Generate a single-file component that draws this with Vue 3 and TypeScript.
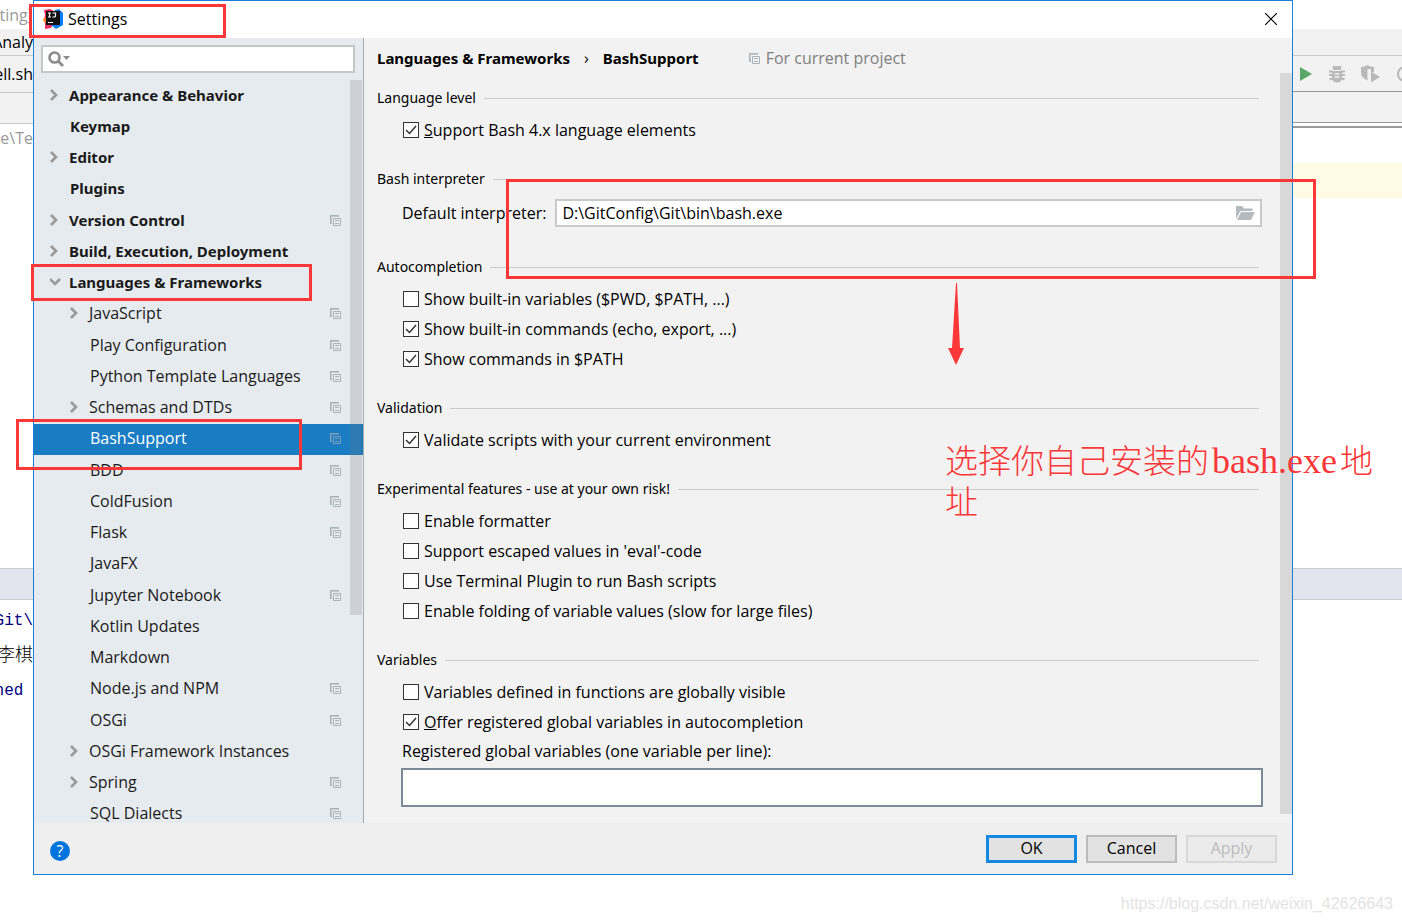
<script setup lang="ts">
import { ref } from 'vue'

interface TreeItem {
  label: string
  level: 0 | 1
  arrow?: 'right' | 'down'
  project?: boolean
}

interface Option {
  id: string
  label: string
  mnemonic?: string
  checked: boolean
}

const tree: TreeItem[] = [
  { label: 'Appearance & Behavior', level: 0, arrow: 'right' },
  { label: 'Keymap', level: 0 },
  { label: 'Editor', level: 0, arrow: 'right' },
  { label: 'Plugins', level: 0 },
  { label: 'Version Control', level: 0, arrow: 'right', project: true },
  { label: 'Build, Execution, Deployment', level: 0, arrow: 'right' },
  { label: 'Languages & Frameworks', level: 0, arrow: 'down' },
  { label: 'JavaScript', level: 1, arrow: 'right', project: true },
  { label: 'Play Configuration', level: 1, project: true },
  { label: 'Python Template Languages', level: 1, project: true },
  { label: 'Schemas and DTDs', level: 1, arrow: 'right', project: true },
  { label: 'BashSupport', level: 1, project: true },
  { label: 'BDD', level: 1, project: true },
  { label: 'ColdFusion', level: 1, project: true },
  { label: 'Flask', level: 1, project: true },
  { label: 'JavaFX', level: 1 },
  { label: 'Jupyter Notebook', level: 1, project: true },
  { label: 'Kotlin Updates', level: 1 },
  { label: 'Markdown', level: 1 },
  { label: 'Node.js and NPM', level: 1, project: true },
  { label: 'OSGi', level: 1, project: true },
  { label: 'OSGi Framework Instances', level: 1, arrow: 'right' },
  { label: 'Spring', level: 1, arrow: 'right', project: true },
  { label: 'SQL Dialects', level: 1, project: true },
]

const selected = ref('BashSupport')
const query = ref('')
const interpreter = ref('D:\\GitConfig\\Git\\bin\\bash.exe')
const globals = ref('')

const language = ref<Option[]>([
  { id: 'bash4', mnemonic: 'S', label: 'upport Bash 4.x language elements', checked: true },
])
const completion = ref<Option[]>([
  { id: 'vars', label: 'Show built-in variables ($PWD, $PATH, ...)', checked: false },
  { id: 'cmds', label: 'Show built-in commands (echo, export, ...)', checked: true },
  { id: 'path', label: 'Show commands in $PATH', checked: true },
])
const validation = ref<Option[]>([
  { id: 'validate', label: 'Validate scripts with your current environment', checked: true },
])
const experimental = ref<Option[]>([
  { id: 'formatter', label: 'Enable formatter', checked: false },
  { id: 'eval', label: "Support escaped values in 'eval'-code", checked: false },
  { id: 'terminal', label: 'Use Terminal Plugin to run Bash scripts', checked: false },
  { id: 'folding', label: 'Enable folding of variable values (slow for large files)', checked: false },
])
const variables = ref<Option[]>([
  { id: 'global', label: 'Variables defined in functions are globally visible', checked: false },
  { id: 'offer', mnemonic: 'O', label: 'ffer registered global variables in autocompletion', checked: true },
])

const sections = [
  { title: 'Language level', options: language },
  { title: 'Bash interpreter', options: null },
  { title: 'Autocompletion', options: completion },
  { title: 'Validation', options: validation },
  { title: 'Experimental features - use at your own risk!', options: experimental },
  { title: 'Variables', options: variables },
]
</script>

<template>
  <div class="desktop">
    <svg class="defs" aria-hidden="true">
      <symbol id="copy" viewBox="0 0 11 11">
        <path d="M0 0h9v2H2v7H0z" fill="currentColor" opacity=".6" />
        <path d="M.5 8.500v-8h8v1M.5 8.500h1.500" fill="none" stroke="currentColor" />
        <path d="M3.500 3.500h7v7h-7zM5 5.500h4M5 8.500h4" fill="none" stroke="currentColor" />
      </symbol>
    </svg>

    <div class="ide ide-left">
      <div class="bar caption">ting]</div>
      <div class="bar menu">Analy</div>
      <div class="bar tools">ell.sh</div>
      <div class="bar tabs"></div>
      <div class="editor path">ce\Te</div>
      <div class="bar split"></div>
      <div class="console">
        <span>Git\</span>
        <span class="cn">李棋</span>
        <span>ned&nbsp;</span>
      </div>
    </div>

    <main class="dialog">
      <header class="titlebar">
        <svg class="logo" width="20" height="20" viewBox="0 0 20 20">
          <path d="M1 1l6-1 6 3-4 8-8-1 1-4z" fill="#fe2857" />
          <path d="M0 10l5-3 3 10-7-4z" fill="#fc801d" />
          <path d="M2 13l8 3-2 3-6 1z" fill="#e8315f" />
          <path d="M12 1l4-1 4 4v12l-7 4-5-4z" fill="#087cfa" />
          <rect x="3" y="2" width="14" height="14" fill="#111" />
          <path d="M5 4h3M6.500 4v4M5 8h3M9.500 4h3v3q0 1-1.500 1H9.500M5 13.500h5" fill="none" stroke="#fff" stroke-width="1.200" />
        </svg>
        <h1>Settings</h1>
        <button class="close" type="button" aria-label="Close">
          <svg width="12" height="12" viewBox="0 0 12 12">
            <path d="M0 0l12 12M12 0L0 12" stroke="#000" stroke-width="1.200" />
          </svg>
        </button>
      </header>

      <div class="body">
        <nav class="side">
          <div class="search">
            <svg width="24" height="16" viewBox="0 0 24 16">
              <circle cx="6.500" cy="6.500" r="5" fill="none" stroke="#8c8c8c" stroke-width="2.600" />
              <path d="M10 10l5 5" stroke="#8c8c8c" stroke-width="2.800" />
              <path d="M15 5h7l-3.500 4z" fill="#8c8c8c" />
            </svg>
            <input v-model="query" type="text" aria-label="Search settings" />
          </div>
          <div class="tree-wrap">
            <ul class="tree">
              <li v-for="item in tree" :key="item.label">
                <button
                  type="button"
                  class="node"
                  :class="['level-' + item.level, { leaf: !item.arrow, active: item.label === selected }]"
                  @click="selected = item.label"
                >
                  <span class="twisty">
                    <svg v-if="item.arrow === 'right'" width="8" height="12" viewBox="0 0 8 12">
                      <path d="M1 1l5 5-5 5" fill="none" stroke="#999" stroke-width="2.600" />
                    </svg>
                    <svg v-else-if="item.arrow === 'down'" class="down" width="12" height="8" viewBox="0 0 12 8">
                      <path d="M0 1l5 5 5-5" fill="none" stroke="#999" stroke-width="2.600" />
                    </svg>
                  </span>
                  <span class="name">{{ item.label }}</span>
                  <svg v-if="item.project" class="copy" width="11" height="11"><use href="#copy" /></svg>
                </button>
              </li>
            </ul>
            <div class="thumb"></div>
          </div>
        </nav>

        <section class="content">
          <div class="crumbs">
            <h2>Languages &amp; Frameworks</h2>
            <span class="sep">›</span>
            <h2>BashSupport</h2>
            <span class="scope">
              <svg class="copy" width="11" height="11"><use href="#copy" /></svg>
              For current project
            </span>
          </div>

          <div class="form">
            <section v-for="s in sections" :key="s.title" class="group">
              <h3>{{ s.title }}</h3>
              <template v-if="s.options">
                <label v-for="o in s.options.value" :key="o.id" class="check">
                  <input v-model="o.checked" type="checkbox" />
                  <span><u v-if="o.mnemonic">{{ o.mnemonic }}</u>{{ o.label }}</span>
                </label>
              </template>
              <div v-else class="field">
                <label for="interpreter">Default interpreter:</label>
                <div class="path-box">
                  <input id="interpreter" v-model="interpreter" type="text" />
                  <button type="button" aria-label="Browse">
                    <svg width="19" height="14" viewBox="0 0 19 14">
                      <path d="M0 13V0h6l2 2.500h8.500V5H4.500z" fill="#b4bcc2" />
                      <path d="M5 6h14l-4 8H1z" fill="#b4bcc2" />
                    </svg>
                  </button>
                </div>
              </div>
            </section>
            <div class="globals">
              <label for="globals">Registered global variables (one variable per line):</label>
              <textarea id="globals" v-model="globals" rows="1"></textarea>
            </div>
          </div>
          <div class="thumb"></div>
        </section>
      </div>

      <footer class="footer">
        <button class="help" type="button" aria-label="Help">?</button>
        <button class="btn primary" type="button">OK</button>
        <button class="btn" type="button">Cancel</button>
        <button class="btn" type="button" disabled>Apply</button>
      </footer>
    </main>

    <div class="ide ide-right">
      <div class="bar caption"></div>
      <div class="bar menu"></div>
      <div class="bar tools">
        <svg width="14" height="16" viewBox="0 0 14 16"><path d="M1 1l12 7-12 7z" fill="#59a869" /></svg>
        <svg width="16" height="18" viewBox="0 0 16 18">
          <path d="M4 5a4 4 0 0 1 8 0zM3 6h10v7a5 4.500 0 0 1-10 0z" fill="#b9b9b9" />
          <path d="M4 1l2 2.500M12 1l-2 2.500M0 6.500h4M12 6.500h4M0 10h4M12 10h4M.5 14.500l3-1M15.500 14.500l-3-1" stroke="#b9b9b9" stroke-width="2" />
          <path d="M5.500 9h5M5.500 12h5" stroke="#f2f2f2" stroke-width="1.500" />
        </svg>
        <svg width="19" height="18" viewBox="0 0 19 18">
          <path d="M0 2q4 0 6.500-2Q9 2 13 2v5h-3V4H6.500v11.500Q0 13 0 7z" fill="#b9b9b9" />
          <path d="M10 6.500l9 5.500-9 5.500z" fill="#b9b9b9" />
        </svg>
        <svg width="18" height="18" viewBox="0 0 18 18">
          <circle cx="9" cy="9" r="7" fill="none" stroke="#b9b9b9" stroke-width="2" />
          <path d="M7 12l3-7" stroke="#b9b9b9" stroke-width="2" />
        </svg>
      </div>
      <div class="bar tabs"></div>
      <div class="editor"><div class="caret-line"></div></div>
      <div class="bar split"></div>
    </div>

    <div class="mark mark-title"></div>
    <div class="mark mark-languages"></div>
    <div class="mark mark-bash"></div>
    <div class="mark mark-field"></div>
    <svg class="arrow" width="16" height="82" viewBox="0 0 16 82">
      <path d="M8 0h1l3 65h4L8 82 0 65h4z" fill="#fb3737" />
    </svg>
    <p class="note">选择你自己安装的<span>bash.exe</span>地址</p>
    <div class="watermark">https://blog.csdn.net/weixin_42626643</div>
  </div>
</template>

<style>
body {
  margin: 0;
  background: #fff;
}
</style>

<style scoped>
* {
  box-sizing: border-box;
}
.desktop {
  position: relative;
  display: grid;
  grid-template-columns: 33px minmax(0, 1fr) 109px;
  align-items: start;
  min-height: 100vh;
  overflow: hidden;
  font: 16px/20px 'Open Sans', 'Noto Sans', 'Noto Sans CJK SC', sans-serif;
  color: #000;
}
.defs {
  position: absolute;
  width: 0;
  height: 0;
}
h1,
h2,
h3,
p,
ul {
  margin: 0;
  padding: 0;
  font-size: inherit;
  font-weight: 400;
}
button,
input,
textarea {
  font: inherit;
  color: inherit;
  padding: 0;
  border: 0;
  outline: 0;
}

.ide {
  overflow: hidden;
}
.bar {
  display: flex;
  align-items: center;
  white-space: nowrap;
  background: #f2f2f2;
  border-bottom: 1px solid #c9c9c9;
}
.ide-left .bar,
.path {
  justify-content: flex-end;
}
.caption {
  height: 29px;
  background: #fff;
  border: 0;
  color: #999;
}
.menu {
  height: 27px;
}
.tools {
  height: 37px;
}
.tabs {
  height: 31px;
}
.editor {
  height: 444px;
}
.path {
  display: flex;
  align-items: flex-start;
  padding-top: 4px;
  color: #999;
}
.split {
  height: 32px;
  background: #e1e4ed;
  border-top: 1px solid #c9c9c9;
}
.console {
  display: flex;
  flex-direction: column;
  align-items: flex-end;
  padding-top: 4px;
  font: 16px/35px 'Liberation Mono', 'Noto Sans CJK SC', monospace;
  color: #000080;
  white-space: nowrap;
}
.cn {
  font-size: 18px;
  font-weight: 300;
  color: #000;
}
.ide-right .tools {
  gap: 16px;
  padding-left: 6px;
  height: 36px;
  border-color: #999;
}
.ide-right .tools svg {
  flex: none;
}
.ide-right .tabs {
  border-color: #999;
}
.ide-right .editor {
  height: 445px;
  padding-top: 3px;
}
.caret-line {
  height: 72px;
  border-top: 2px solid #999;
  background: linear-gradient(#fff 35px, #fffae3 35px);
}

.dialog {
  border: 1px solid #1a80d9;
  background: #f2f2f2;
}
.titlebar {
  display: flex;
  align-items: center;
  height: 37px;
  padding: 0 15px 2px 9px;
  background: #fff;
}
.titlebar h1 {
  flex: 1;
  margin-left: 5px;
}
.close {
  display: flex;
  background: none;
}
.body {
  display: flex;
  height: 785px;
}
.side {
  display: flex;
  flex-direction: column;
  width: 330px;
  border-right: 1px solid #a9a9a9;
  background: #e6ebef;
}
.search {
  display: flex;
  align-items: center;
  height: 28px;
  margin: 7px 8px 7px 7px;
  padding-left: 5px;
  border: 2px solid #c4c7ca;
  background: #fff;
}
.search input {
  flex: 1;
  min-width: 0;
  background: none;
}
.tree-wrap {
  position: relative;
  flex: 1;
  min-height: 0;
  overflow: hidden;
}
.tree {
  padding-top: 1px;
  list-style: none;
}
.tree li:nth-child(4n) {
  margin-bottom: 1px;
}
.node {
  display: flex;
  align-items: center;
  width: 100%;
  height: 31px;
  padding: 0 22px 3px 16px;
  background: none;
  color: #1a1a1a;
  text-align: left;
}
.level-0 {
  font-weight: 700;
  font-size: 15px;
  font-family: 'Noto Sans', 'Open Sans', sans-serif;
}
.level-1 {
  padding-left: 36px;
}
.twisty {
  display: flex;
  width: 19px;
}
.leaf .twisty {
  width: 20px;
}
.name {
  flex: 1;
  white-space: nowrap;
}
.copy {
  color: #a9b3ba;
}
.active {
  background: #1a7dc4;
  color: #fff;
}
.active .copy {
  color: #7f9fb8;
}
.thumb {
  position: absolute;
  top: 0;
  right: 1px;
  width: 12px;
  height: 535px;
  background: rgba(120, 120, 125, 0.22);
}

.content {
  position: relative;
  flex: 1;
  min-width: 0;
  padding: 10px 33px 0 13px;
}
.content .thumb {
  top: 35px;
  right: 0;
  height: 741px;
  background: #d8d8d8;
}
.crumbs {
  display: flex;
  align-items: center;
  height: 20px;
}
.crumbs h2 {
  font: 700 15px/20px 'Noto Sans', 'Open Sans', sans-serif;
}
.sep {
  margin: 0 14px;
}
.scope {
  display: flex;
  align-items: center;
  gap: 6px;
  margin-left: 50px;
  color: #808080;
}
.form {
  margin-top: 20px;
}
.group {
  margin-bottom: 24px;
}
.group h3 {
  display: flex;
  align-items: center;
  gap: 8px;
  margin-bottom: 7px;
  font-family: 'Noto Sans', 'Open Sans', sans-serif;
  font-size: 14px;
}
.group h3::after {
  content: '';
  flex: 1;
  height: 1px;
  background: #c9cbcb;
}
.check {
  display: flex;
  align-items: center;
  gap: 5px;
  height: 30px;
  margin-left: 26px;
}
.check input {
  appearance: none;
  width: 16px;
  height: 16px;
  margin: 0;
  border: 1px solid #333;
  background: #fff;
}
.check input:checked {
  background: #fff
    url("data:image/svg+xml,%3Csvg xmlns='http://www.w3.org/2000/svg' viewBox='0 0 14 14'%3E%3Cpath d='M2 7l3.500 3.500L12 3' fill='none' stroke='%23333' stroke-width='1.500'/%3E%3C/svg%3E");
}
.field {
  display: flex;
  align-items: center;
  gap: 9px;
  height: 34px;
  margin: 7px 0 27px 25px;
}
.path-box {
  display: flex;
  align-items: center;
  flex: 1;
  height: 28px;
  margin-right: -3px;
  padding: 0 5px;
  border: 2px solid #c8caca;
  background: #fff;
}
.path-box input {
  flex: 1;
  min-width: 0;
  background: none;
}
.path-box button {
  display: flex;
  background: none;
}
.globals {
  margin: -20px -4px 0 24px;
}
.globals label {
  display: block;
  margin: 0 0 7px 1px;
}
.globals textarea {
  display: block;
  width: 100%;
  height: 39px;
  border: 2px solid #7a8a99;
  background: #fff;
  resize: none;
}

.footer {
  display: flex;
  align-items: center;
  gap: 9px;
  height: 51px;
  padding: 0 15px 0 16px;
  background: #efefef;
}
.help {
  width: 20px;
  height: 20px;
  margin: 4px auto 0 0;
  border-radius: 50%;
  background: #0073dc;
  color: #fff;
  line-height: 20px;
}
.btn {
  width: 91px;
  height: 28px;
  padding-bottom: 2px;
  border: 2px solid #bcbcbc;
  background: #e2e2e2;
}
.primary {
  border: 3px solid #1588e0;
}
.btn:disabled {
  border-color: #d8d8d8;
  background: #ebebeb;
  color: #bcbcbc;
}

.mark {
  position: absolute;
  border: 3px solid #fb3737;
  pointer-events: none;
}
.mark-title {
  top: 4px;
  left: 29px;
  width: 197px;
  height: 34px;
}
.mark-languages {
  top: 264px;
  left: 31px;
  width: 281px;
  height: 37px;
}
.mark-bash {
  top: 419px;
  left: 16px;
  width: 286px;
  height: 51px;
}
.mark-field {
  top: 179px;
  left: 506px;
  right: 86px;
  height: 100px;
}
.arrow {
  position: absolute;
  top: 283px;
  left: 948px;
}
.note {
  position: absolute;
  top: 439px;
  left: 945px;
  width: 440px;
  font: 300 33px/41px 'Noto Sans CJK SC', sans-serif;
  color: #fb3737;
}
.note span {
  padding: 0 3px;
  font: 36px/20px 'Liberation Serif', serif;
}
.watermark {
  position: absolute;
  right: 9px;
  bottom: 8px;
  font: 16px/20px 'Liberation Sans', Arial, sans-serif;
  color: #e3e3e3;
}
</style>
